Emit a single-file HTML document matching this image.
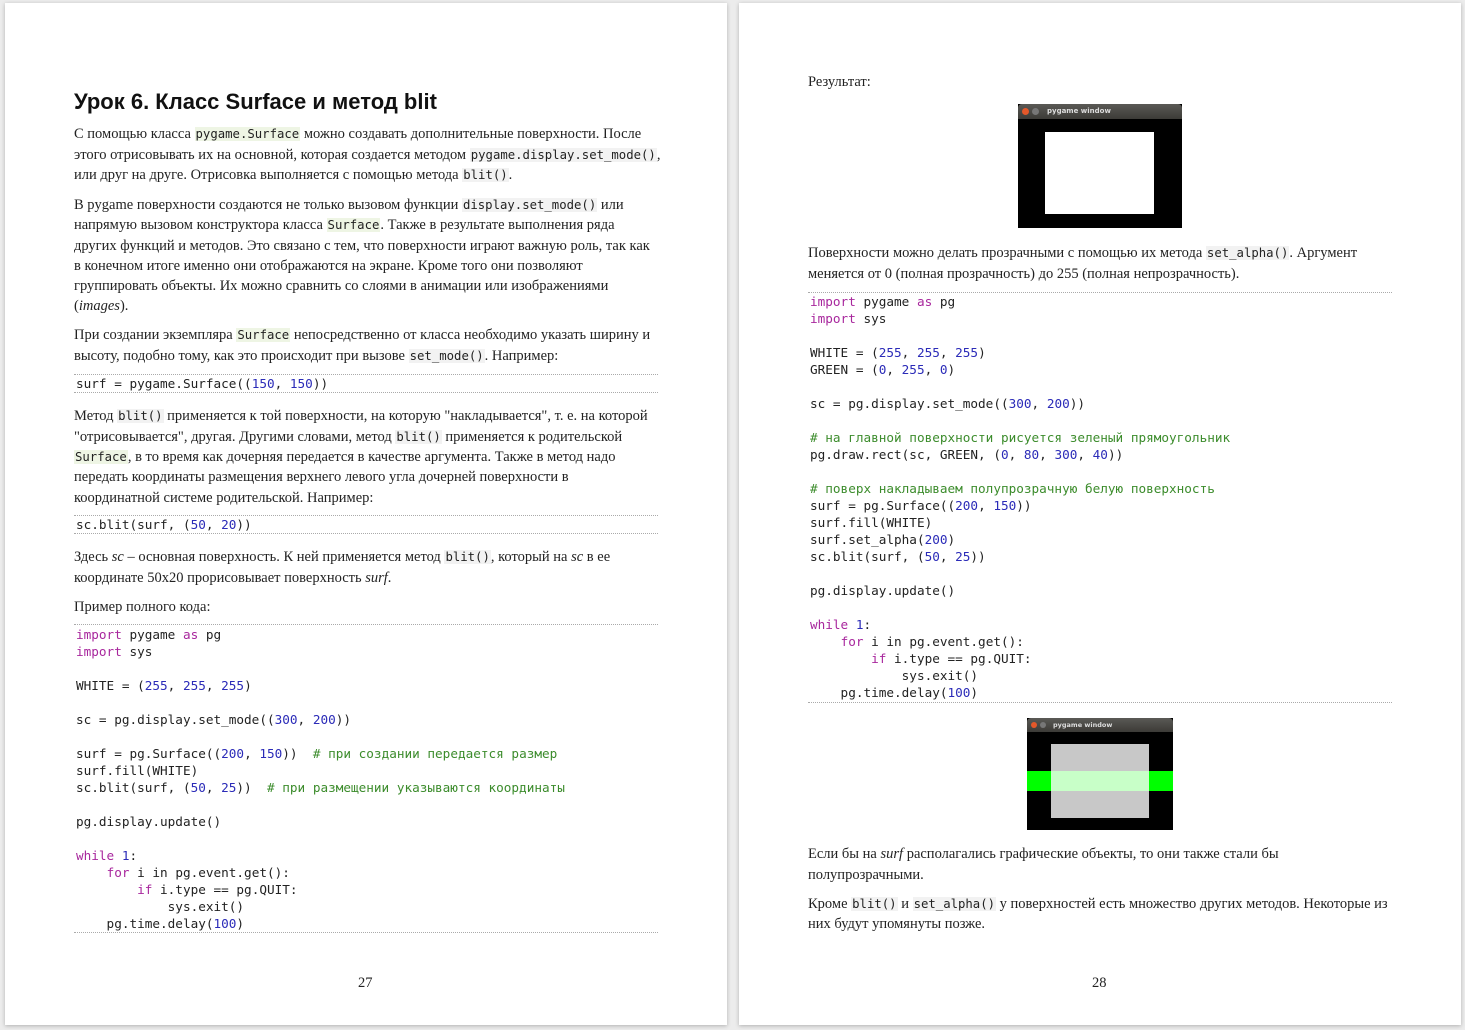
<!DOCTYPE html>
<html><head><meta charset="utf-8">
<style>
body{margin:0;width:1465px;height:1030px;background:#ececec;position:relative;overflow:hidden}
.pg{position:absolute;top:3px;width:722px;height:1022px;background:#fff;box-shadow:0 1px 4px rgba(0,0,0,.25)}
.t{position:absolute;white-space:pre;font-family:"Liberation Serif",serif;font-size:14.5px;line-height:20px;color:#222;margin-top:1px}
.c{position:absolute;white-space:pre;font-family:"DejaVu Sans Mono","Liberation Mono",monospace;font-size:12.7px;line-height:17px;color:#222}
.ic{font-family:"DejaVu Sans Mono","Liberation Mono",monospace;font-size:12.3px;background:#f2f2f2;padding:0 1px}
.g{background:#eef5e4}
.k{color:#a8279d}.n{color:#2b2bb8}.m{color:#3c8c2c}
.hr{position:absolute;height:0;border-top:1px dotted #aaa}
.win{position:absolute;background:#000}
.bar{position:absolute;left:0;right:0;top:0;background:linear-gradient(#5a5955,#3c3b37);border-radius:4px 4px 0 0;color:#ddd;font-family:"DejaVu Sans",sans-serif;font-size:7px;font-weight:bold}
</style></head><body>
<div class="pg" style="left:5px"></div>
<div class="pg" style="left:739px"></div>

<div style="position:absolute;left:74px;top:89px;font-family:'Liberation Sans',sans-serif;font-weight:bold;font-size:22px;color:#111">Урок 6. Класс Surface и метод blit</div>

<div class="t" style="left:74px;top:123px">С помощью класса <span class="ic g">pygame.Surface</span> можно создавать дополнительные поверхности. После</div>
<div class="t" style="left:74px;top:144px">этого отрисовывать их на основной, которая создается методом <span class="ic">pygame.display.set_mode()</span>,</div>
<div class="t" style="left:74px;top:164px">или друг на друге. Отрисовка выполняется с помощью метода <span class="ic">blit()</span>.</div>

<div class="t" style="left:74px;top:194px">В pygame поверхности создаются не только вызовом функции <span class="ic">display.set_mode()</span> или</div>
<div class="t" style="left:74px;top:214px">напрямую вызовом конструктора класса <span class="ic g">Surface</span>. Также в результате выполнения ряда</div>
<div class="t" style="left:74px;top:235px">других функций и методов. Это связано с тем, что поверхности играют важную роль, так как</div>
<div class="t" style="left:74px;top:255px">в конечном итоге именно они отображаются на экране. Кроме того они позволяют</div>
<div class="t" style="left:74px;top:275px">группировать объекты. Их можно сравнить со слоями в анимации или изображениями</div>
<div class="t" style="left:74px;top:295px">(<i>images</i>).</div>

<div class="t" style="left:74px;top:324px">При создании экземпляра <span class="ic g">Surface</span> непосредственно от класса необходимо указать ширину и</div>
<div class="t" style="left:74px;top:345px">высоту, подобно тому, как это происходит при вызове <span class="ic">set_mode()</span>. Например:</div>

<div class="hr" style="left:74px;width:584px;top:374px"></div>
<div class="c" style="left:76px;top:375px">surf = pygame.Surface((<span class="n">150</span>, <span class="n">150</span>))</div>
<div class="hr" style="left:74px;width:584px;top:392px"></div>

<div class="t" style="left:74px;top:405px">Метод <span class="ic">blit()</span> применяется к той поверхности, на которую "накладывается", т. е. на которой</div>
<div class="t" style="left:74px;top:426px">"отрисовывается", другая. Другими словами, метод <span class="ic">blit()</span> применяется к родительской</div>
<div class="t" style="left:74px;top:446px"><span class="ic g">Surface</span>, в то время как дочерняя передается в качестве аргумента. Также в метод надо</div>
<div class="t" style="left:74px;top:466px">передать координаты размещения верхнего левого угла дочерней поверхности в</div>
<div class="t" style="left:74px;top:487px">координатной системе родительской. Например:</div>

<div class="hr" style="left:74px;width:584px;top:515px"></div>
<div class="c" style="left:76px;top:516px">sc.blit(surf, (<span class="n">50</span>, <span class="n">20</span>))</div>
<div class="hr" style="left:74px;width:584px;top:533px"></div>

<div class="t" style="left:74px;top:546px">Здесь <i>sc</i> – основная поверхность. К ней применяется метод <span class="ic">blit()</span>, который на <i>sc</i> в ее</div>
<div class="t" style="left:74px;top:567px">координате 50x20 прорисовывает поверхность <i>surf</i>.</div>
<div class="t" style="left:74px;top:596px">Пример полного кода:</div>

<div class="hr" style="left:74px;width:584px;top:624px"></div>
<div class="c" style="left:76px;top:626px"><span class="k">import</span> pygame <span class="k">as</span> pg
<span class="k">import</span> sys

WHITE = (<span class="n">255</span>, <span class="n">255</span>, <span class="n">255</span>)

sc = pg.display.set_mode((<span class="n">300</span>, <span class="n">200</span>))

surf = pg.Surface((<span class="n">200</span>, <span class="n">150</span>))  <span class="m"># при создании передается размер</span>
surf.fill(WHITE)
sc.blit(surf, (<span class="n">50</span>, <span class="n">25</span>))  <span class="m"># при размещении указываются координаты</span>

pg.display.update()

<span class="k">while</span> <span class="n">1</span>:
    <span class="k">for</span> i in pg.event.get():
        <span class="k">if</span> i.type == pg.QUIT:
            sys.exit()
    pg.time.delay(<span class="n">100</span>)</div>
<div class="hr" style="left:74px;width:584px;top:932px"></div>

<div class="t" style="left:358px;top:972px">27</div>

<!-- page 2 -->
<div class="t" style="left:808px;top:71px">Результат:</div>

<div class="win" style="left:1018px;top:104px;width:164px;height:124px">
  <div class="bar" style="height:15px"><span style="position:absolute;left:4px;top:4px;width:7px;height:7px;border-radius:50%;background:#e4582a"></span><span style="position:absolute;left:14px;top:4px;width:7px;height:7px;border-radius:50%;background:#777"></span><span style="position:absolute;left:29px;top:3px">pygame window</span></div>
  <div style="position:absolute;left:27px;top:28px;width:109px;height:82px;background:#fff"></div>
</div>

<div class="t" style="left:808px;top:242px">Поверхности можно делать прозрачными с помощью их метода <span class="ic">set_alpha()</span>. Аргумент</div>
<div class="t" style="left:808px;top:263px">меняется от 0 (полная прозрачность) до 255 (полная непрозрачность).</div>

<div class="hr" style="left:808px;width:584px;top:292px"></div>
<div class="c" style="left:810px;top:293px"><span class="k">import</span> pygame <span class="k">as</span> pg
<span class="k">import</span> sys

WHITE = (<span class="n">255</span>, <span class="n">255</span>, <span class="n">255</span>)
GREEN = (<span class="n">0</span>, <span class="n">255</span>, <span class="n">0</span>)

sc = pg.display.set_mode((<span class="n">300</span>, <span class="n">200</span>))

<span class="m"># на главной поверхности рисуется зеленый прямоугольник</span>
pg.draw.rect(sc, GREEN, (<span class="n">0</span>, <span class="n">80</span>, <span class="n">300</span>, <span class="n">40</span>))

<span class="m"># поверх накладываем полупрозрачную белую поверхность</span>
surf = pg.Surface((<span class="n">200</span>, <span class="n">150</span>))
surf.fill(WHITE)
surf.set_alpha(<span class="n">200</span>)
sc.blit(surf, (<span class="n">50</span>, <span class="n">25</span>))

pg.display.update()

<span class="k">while</span> <span class="n">1</span>:
    <span class="k">for</span> i in pg.event.get():
        <span class="k">if</span> i.type == pg.QUIT:
            sys.exit()
    pg.time.delay(<span class="n">100</span>)</div>
<div class="hr" style="left:808px;width:584px;top:702px"></div>

<div class="win" style="left:1027px;top:718px;width:146px;height:112px">
  <div class="bar" style="height:14px"><span style="position:absolute;left:4px;top:4px;width:6px;height:6px;border-radius:50%;background:#e4582a"></span><span style="position:absolute;left:13px;top:4px;width:6px;height:6px;border-radius:50%;background:#777"></span><span style="position:absolute;left:26px;top:3px;font-size:6.5px">pygame window</span></div>
  <div style="position:absolute;left:0;top:53px;width:146px;height:20px;background:#00ff00"></div>
  <div style="position:absolute;left:24px;top:26px;width:98px;height:74px;background:#c8c8c8"></div>
  <div style="position:absolute;left:24px;top:53px;width:98px;height:20px;background:#c8ffc8"></div>
</div>

<div class="t" style="left:808px;top:843px">Если бы на <i>surf</i> располагались графические объекты, то они также стали бы</div>
<div class="t" style="left:808px;top:864px">полупрозрачными.</div>
<div class="t" style="left:808px;top:893px">Кроме <span class="ic">blit()</span> и <span class="ic">set_alpha()</span> у поверхностей есть множество других методов. Некоторые из</div>
<div class="t" style="left:808px;top:913px">них будут упомянуты позже.</div>

<div class="t" style="left:1092px;top:972px">28</div>
</body></html>
